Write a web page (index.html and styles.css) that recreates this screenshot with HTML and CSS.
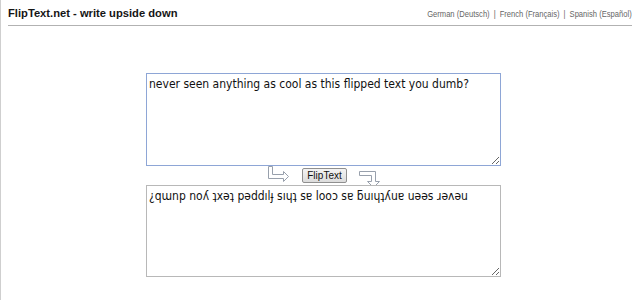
FILE: index.html
```html
<!DOCTYPE html>
<html>
<head>
<meta charset="utf-8">
<title>FlipText.net - write upside down</title>
<link rel="stylesheet" href="styles.css">
</head>
<body>
<div class="page">
  <header class="header">
    <h1 class="title">FlipText.net - write upside down</h1>
    <nav class="langs">
      <a class="lang" href="#">German (Deutsch)</a><span class="sep">|</span><a class="lang" href="#">French (Français)</a><span class="sep">|</span><a class="lang" href="#">Spanish (Español)</a>
    </nav>
  </header>
  <main class="main">
    <textarea class="box box-in">never seen anything as cool as this flipped text you dumb?</textarea>
    <div class="controls">
      <svg class="arrow arrow-right" width="22" height="16" viewBox="0 0 22 16"><path d="M0.5 0.5H4.5V8.5H15.5V5.5L20.5 10.5L15.5 15.5V12.5H0.5Z"/></svg>
      <button class="flip" type="button">FlipText</button>
      <svg class="arrow arrow-down" width="22" height="18" viewBox="0 0 22 18"><path d="M0.5 0.5H16.5V10.5H20.5L14.5 16.5L8.5 10.5H12.5V4.5H0.5Z"/></svg>
    </div>
    <textarea class="box box-out">¿qɯnp noʎ ʇxǝʇ pǝddılɟ sıɥʇ sɐ looɔ sɐ ƃuıɥʇʎuɐ uǝǝs ɹǝʌǝu</textarea>
  </main>
</div>
</body>
</html>
```
FILE: styles.css
```css
html, body {
  margin: 0;
  padding: 0;
  background: #fff;
}
.page {
  min-height: 300px;
  box-sizing: border-box;
  border-left: 1px solid #cfcfcf;
  font-family: "Liberation Sans", Arial, sans-serif;
}
.header {
  display: flex;
  justify-content: space-between;
  align-items: baseline;
  margin: 0 8px 0 7px;
  padding-top: 7px;
  height: 26px;
  box-sizing: border-box;
  border-bottom: 1px solid #b2b2b2;
}
.title {
  margin: 0;
  font-size: 11.2px;
  font-weight: bold;
  color: #151515;
  line-height: 13px;
}
.langs {
  font-size: 9.5px;
  color: #666;
  line-height: 12px;
  transform: scaleX(0.8);
  transform-origin: right center;
  white-space: nowrap;
}
.lang {
  color: #666;
  text-decoration: none;
}
.sep {
  margin: 0 5px;
}
.main {
  display: flex;
  flex-direction: column;
  align-items: center;
  padding-top: 47px;
  padding-left: 6px;
}
.box {
  display: block;
  width: 355px;
  box-sizing: border-box;
  margin: 0;
  padding: 2px;
  font-family: "DejaVu Sans Condensed", "DejaVu Sans", sans-serif;
  font-size: 12px;
  line-height: 15px;
  color: #111;
  background: #fff;
  resize: both;
  outline: none;
}
.box-in {
  height: 93px;
  border: 1px solid #8ea6d6;
  padding-top: 3px;
}
.box-out {
  height: 92px;
  border: 1px solid #b8b8b8;
  padding-top: 3px;
}
.controls {
  display: flex;
  align-items: flex-start;
  justify-content: center;
  gap: 12px;
  width: 355px;
  height: 19px;
  padding-left: 2px;
  box-sizing: border-box;
}
.arrow path {
  fill: #fff;
  stroke: #98a0ac;
  stroke-width: 1;
}
.arrow-right {
  margin-top: 0;
}
.arrow-down {
  margin-top: 5px;
}
.flip {
  margin-top: 2px;
  width: 45px;
  height: 15px;
  padding: 0;
  font-family: "Liberation Sans", Arial, sans-serif;
  font-size: 10px;
  line-height: 13px;
  color: #111;
  background: linear-gradient(#f4f4f4, #dcdcdc);
  border: 1px solid #8f8f8f;
  border-radius: 2px;
}
```
